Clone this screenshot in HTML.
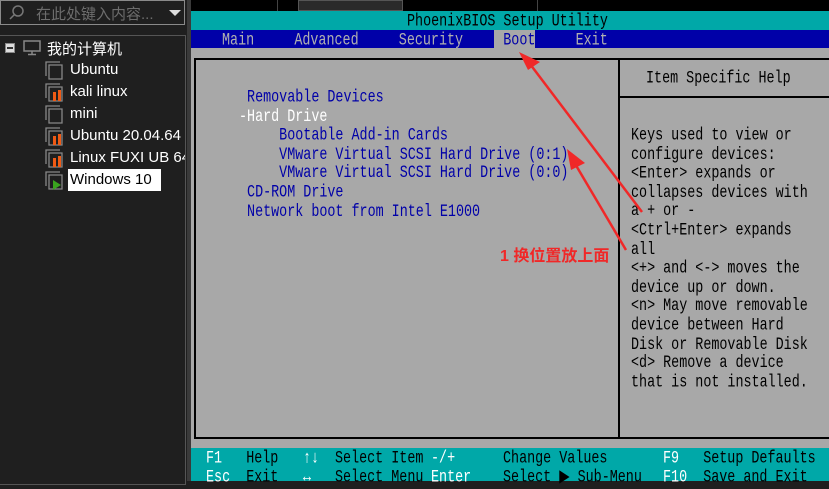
<!DOCTYPE html>
<html><head><meta charset="utf-8"><style>
*{margin:0;padding:0;box-sizing:border-box}
body{width:829px;height:481px;overflow:hidden;background:#1f1f1f;position:relative;font-family:"Liberation Sans","Noto Sans CJK SC",sans-serif}
.m{font-family:"Liberation Mono",monospace;font-size:13.4px;position:absolute;white-space:pre;line-height:14.6px;letter-spacing:0;transform:scaleY(1.3);transform-origin:left top;margin-top:3px}
.b{color:#0000a8}.k{color:#000}.w{color:#fff}.g{color:#b0b0b0}
.t{position:absolute;color:#fff;font-size:15px;white-space:nowrap}
</style></head><body>
<div style="position:absolute;left:0;top:0;width:185px;height:25px;border:1px solid #8a8a8a;background:#1f1f1f"></div>
<svg style="position:absolute;left:8px;top:4px" width="18" height="18"><circle cx="10" cy="7" r="5" fill="none" stroke="#777" stroke-width="1.5"/><line x1="6.5" y1="10.5" x2="2" y2="15" stroke="#777" stroke-width="1.5"/></svg>
<div class="t" style="left:36px;top:3px;color:#6d6d6d">在此处键入内容...</div>
<div style="position:absolute;left:169px;top:10px;border-left:6px solid transparent;border-right:6px solid transparent;border-top:6px solid #ddd"></div>
<div style="position:absolute;left:-2px;top:35px;width:188px;height:450px;border:1px solid #555"></div>
<div style="position:absolute;left:5px;top:43px;width:10px;height:10px;background:#ddd;border:1px solid #888"><div style="margin:3px 1px;height:2px;background:#333"></div></div>
<svg style="position:absolute;left:23px;top:40px" width="20" height="16"><rect x="1" y="1" width="16" height="10" fill="none" stroke="#888" stroke-width="1.5"/><line x1="9" y1="11" x2="9" y2="14" stroke="#888" stroke-width="1.5"/><line x1="5" y1="14.5" x2="13" y2="14.5" stroke="#888" stroke-width="1.5"/></svg>
<div class="t" style="left:47px;top:38px">我的计算机</div>
<svg style="position:absolute;left:44px;top:60px" width="22" height="140">
<g fill="none" stroke="#888" stroke-width="1.3">
<path d="M2 16V2h14M5 19V5h13v14z"/>
<path d="M2 38V24h14M5 41V27h13v14z"/>
<path d="M2 60V46h14M5 63V49h13v14z"/>
<path d="M2 82V68h14M5 85V71h13v14z"/>
<path d="M2 104V90h14M5 107V93h13v14z"/>
<path d="M2 126V112h14M5 129V115h13v14z"/>
</g>
<g fill="#f05a14"><rect x="9" y="32" width="3" height="9"/><rect x="14" y="30" width="3" height="11"/>
<rect x="9" y="76" width="3" height="9"/><rect x="14" y="74" width="3" height="11"/>
<rect x="9" y="98" width="3" height="9"/><rect x="14" y="96" width="3" height="11"/></g>
<path d="M9 120L17 125L9 130z" fill="#3aa51e"/>
</svg>
<div class="t" style="left:70px;top:61px">Ubuntu</div>
<div class="t" style="left:70px;top:83px">kali linux</div>
<div class="t" style="left:70px;top:105px">mini</div>
<div class="t" style="left:70px;top:127px;width:115px;overflow:hidden">Ubuntu 20.04.64</div>
<div class="t" style="left:70px;top:149px;width:115px;overflow:hidden">Linux FUXI UB 64</div>
<div style="position:absolute;left:68px;top:169px;width:93px;height:22px;background:#fff"></div>
<div class="t" style="left:70px;top:171px;color:#000">Windows 10</div>
<div style="position:absolute;left:187px;top:0;width:4px;height:481px;background:#3a3a3a"></div>
<div style="position:absolute;left:191px;top:0;width:640px;height:11px;background:#000"></div>
<div style="position:absolute;left:277px;top:0;width:1px;height:11px;background:#444"></div>
<div style="position:absolute;left:298px;top:0;width:105px;height:11px;background:#2a2a2a;border:1px solid #555"></div>
<div style="position:absolute;left:537px;top:0;width:1px;height:11px;background:#444"></div>
<div style="position:absolute;left:191px;top:11px;width:638px;height:19px;background:#00a8a8"></div>
<div class="m k" style="left:407px;top:11px">PhoenixBIOS Setup Utility</div>
<div style="position:absolute;left:191px;top:30px;width:638px;height:18px;background:#0000a8"></div>
<div style="position:absolute;left:494px;top:30px;width:41px;height:18px;background:#a8a8a8"></div>
<div class="m g" style="left:222px;top:30px">Main     Advanced     Security     <span class="b">Boot</span>     Exit</div>
<div style="position:absolute;left:191px;top:48px;width:638px;height:400px;background:#a8a8a8"></div>
<div style="position:absolute;left:194px;top:58px;width:640px;height:381px;border:2px solid #000"></div>
<div style="position:absolute;left:618px;top:58px;width:2px;height:381px;background:#000"></div>
<div style="position:absolute;left:618px;top:96px;width:220px;height:2px;background:#000"></div>
<div class="m k" style="left:646px;top:68px">Item Specific Help</div>
<div class="m b" style="left:239px;top:87px"> Removable Devices
<span class="w">-Hard Drive</span>
     Bootable Add-in Cards
     VMware Virtual SCSI Hard Drive (0:1)
     VMware Virtual SCSI Hard Drive (0:0)
 CD-ROM Drive
 Network boot from Intel E1000</div>
<div class="m k" style="left:631px;top:125px">Keys used to view or
configure devices:
&lt;Enter&gt; expands or
collapses devices with
a + or -
&lt;Ctrl+Enter&gt; expands
all
&lt;+&gt; and &lt;-&gt; moves the
device up or down.
&lt;n&gt; May move removable
device between Hard
Disk or Removable Disk
&lt;d&gt; Remove a device
that is not installed.</div>
<div style="position:absolute;left:191px;top:448px;width:638px;height:33px;background:#00a8a8"></div>
<div class="m w" style="left:206px;top:448px">F1   <span class="k">Help</span></div>
<div class="m w" style="left:206px;top:467px">Esc  <span class="k">Exit</span></div>
<div class="m w" style="left:303px;top:448px">↑↓</div>
<div class="m w" style="left:303px;top:467px">↔</div>
<div class="m k" style="left:335px;top:448px">Select Item</div>
<div class="m k" style="left:335px;top:467px">Select Menu</div>
<div class="m w" style="left:431px;top:448px">-/+</div>
<div class="m w" style="left:431px;top:467px">Enter</div>
<div class="m k" style="left:503px;top:448px">Change Values</div>
<div class="m k" style="left:503px;top:467px">Select ▶ Sub-Menu</div>
<div class="m w" style="left:663px;top:448px">F9   <span class="k">Setup Defaults</span></div>
<div class="m w" style="left:663px;top:467px">F10  <span class="k">Save and Exit</span></div>
<svg style="position:absolute;left:0;top:0" width="829" height="481">
<g stroke="#f02828" stroke-width="2.5" fill="#f02828">
<line x1="642" y1="212" x2="530" y2="64"/>
<path d="M519 52L540 62L528 70z" stroke="none"/>
<line x1="626" y1="250" x2="574" y2="162"/>
<path d="M567 149L585 163L571 170z" stroke="none"/>
</g>
</svg>
<div style="position:absolute;left:500px;top:242px;color:#f02828;font-weight:bold;font-size:16px;white-space:nowrap">1 换位置放上面</div>
</body></html>
